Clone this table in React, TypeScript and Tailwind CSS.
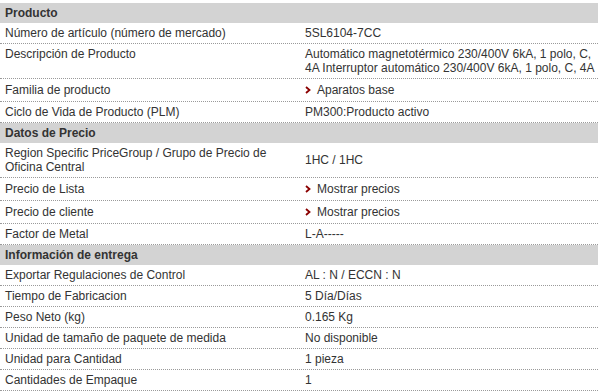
import React from "react";

type Row = { label: string; value: React.ReactNode; link?: boolean; tall?: boolean; center?: boolean };

const Chevron = () => (
  <svg width="6" height="8" viewBox="0 0 6 8" className="mr-[6px] shrink-0">
    <polyline points="1,1 4.5,4 1,7" fill="none" stroke="#8b0000" strokeWidth="1.8" />
  </svg>
);

const sections: { title: string; rows: Row[] }[] = [
  {
    title: "Producto",
    rows: [
      { label: "Número de artículo (número de mercado)", value: "5SL6104-7CC" },
      {
        label: "Descripción de Producto",
        value:
          "Automático magnetotérmico 230/400V 6kA, 1 polo, C, 4A Interruptor automático 230/400V 6kA, 1 polo, C, 4A",
      },
      { label: "Familia de producto", value: "Aparatos base", link: true },
      { label: "Ciclo de Vida de Producto (PLM)", value: "PM300:Producto activo" },
    ],
  },
  {
    title: "Datos de Precio",
    rows: [
      { label: "Region Specific PriceGroup / Grupo de Precio de Oficina Central", value: "1HC / 1HC", center: true },
      { label: "Precio de Lista", value: "Mostrar precios", link: true },
      { label: "Precio de cliente", value: "Mostrar precios", link: true },
      { label: "Factor de Metal", value: "L-A-----" },
    ],
  },
  {
    title: "Información de entrega",
    rows: [
      { label: "Exportar Regulaciones de Control", value: "AL : N / ECCN : N" },
      { label: "Tiempo de Fabricacion", value: "5 Día/Días" },
      { label: "Peso Neto (kg)", value: "0.165 Kg" },
      { label: "Unidad de tamaño de paquete de medida", value: "No disponible" },
      { label: "Unidad para Cantidad", value: "1 pieza" },
      { label: "Cantidades de Empaque", value: "1" },
    ],
  },
];

export default function App() {
  return (
    <div
      className="w-[604px] h-[392px] bg-white pt-[3px] text-[12px] leading-[14px] text-[#333]"
      style={{ fontFamily: '"Liberation Sans", Arial, sans-serif' }}
    >
      <div className="w-[598px]">
        {sections.map((s) => (
          <div key={s.title}>
            <div className="bg-[#d3d3d3] px-[5px] py-[3px] font-bold">{s.title}</div>
            {s.rows.map((r) => (
              <div
                key={r.label}
                className="grid grid-cols-[300px_298px] border-b border-dotted border-[#9a9a9a]"
              >
                <div className={`pl-[5px] pr-[20px] ${r.link ? "py-[4px]" : "py-[3px]"}`}>{r.label}</div>
                <div
                  className={`pl-[5px] pr-[1px] ${r.link ? "py-[4px] flex items-center" : "py-[3px]"} ${
                    r.center ? "self-center" : ""
                  }`}
                >
                  {r.link && <Chevron />}
                  <span>{r.value}</span>
                </div>
              </div>
            ))}
          </div>
        ))}
      </div>
    </div>
  );
}
